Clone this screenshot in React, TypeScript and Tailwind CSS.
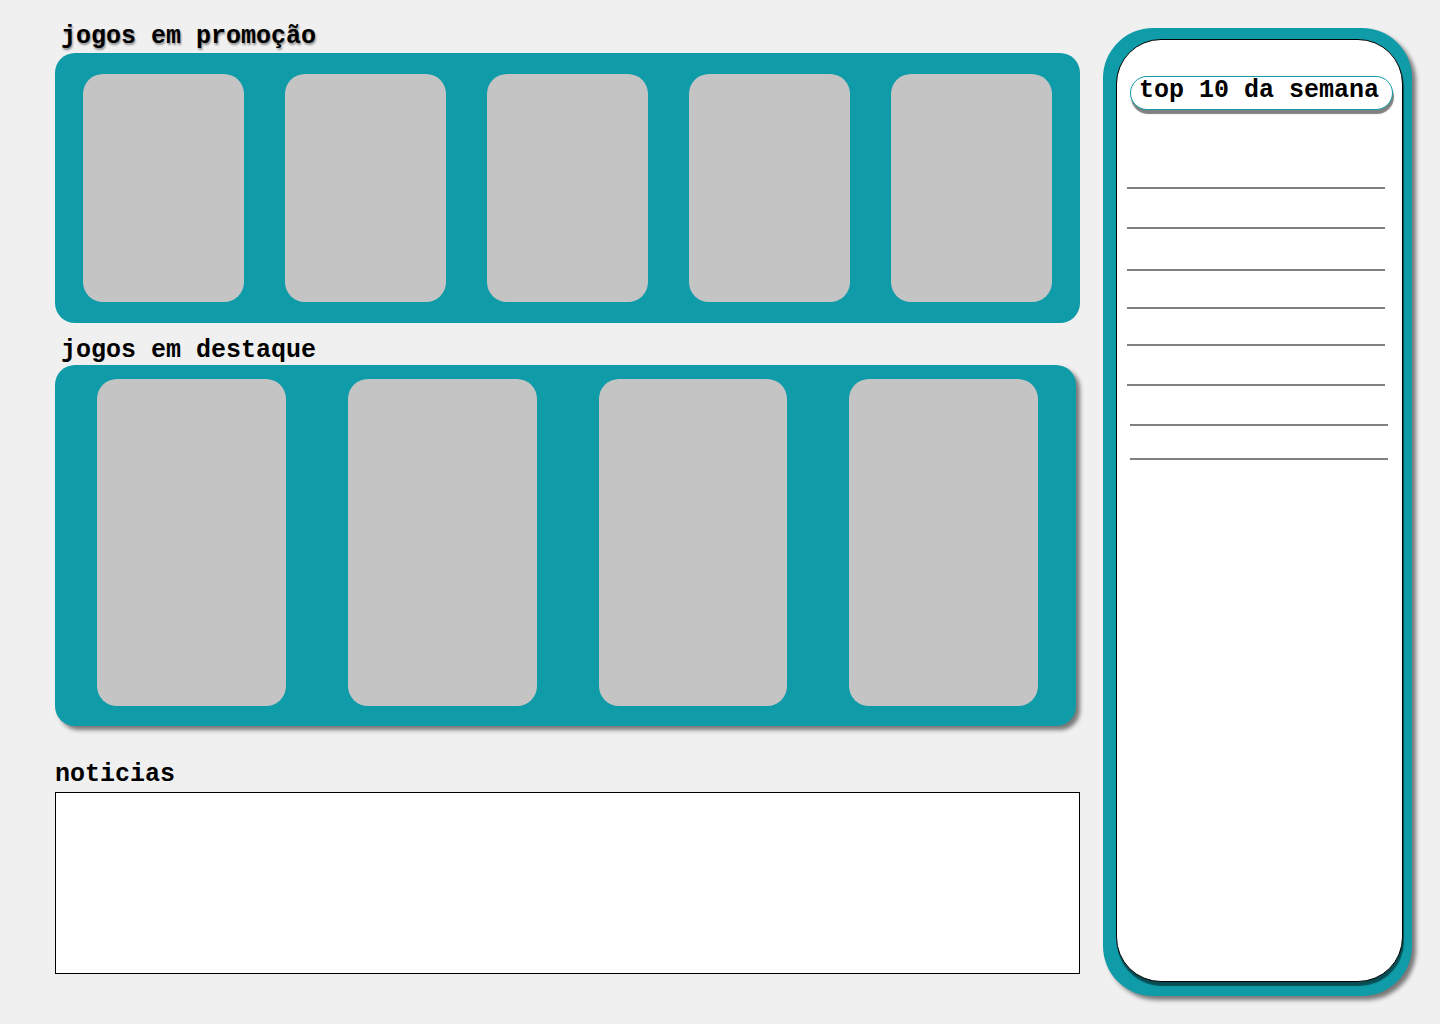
const promoGames = ["promo-1", "promo-2", "promo-3", "promo-4", "promo-5"];
const featuredGames = ["destaque-1", "destaque-2", "destaque-3", "destaque-4"];

const heading = "font-['Liberation_Mono',monospace] text-[25px] leading-7 font-bold text-black whitespace-nowrap";
const row = "border-b-2 border-[#808080]";

export default function App() {
  return (
    <div className="flex min-h-screen items-start gap-[23px] bg-[#f0f0f0] pr-7 pl-[55px]">
      <main className="min-w-0 flex-1 pt-[23px]">
        <section aria-labelledby="promo">
          <h2 id="promo" className={`${heading} pl-1.5 [text-shadow:1px_2px_2px_rgba(0,0,0,0.4)]`}>
            jogos em promoção
          </h2>
          <ul className="mt-0.5 grid grid-cols-5 gap-[41px] rounded-[20px] bg-[#0f9ba8] px-7 py-[21px]">
            {promoGames.map((id) => (
              <li key={id} className="h-[228px] rounded-[20px] bg-[#c4c4c4]" />
            ))}
          </ul>
        </section>

        <section aria-labelledby="destaque" className="mt-[14px]">
          <h2 id="destaque" className={`${heading} pl-1.5`}>
            jogos em destaque
          </h2>
          <ul className="mr-1 grid grid-cols-4 gap-[62px] rounded-[20px] bg-[#0f9ba8] pt-[14px] pr-[38px] pb-5 pl-[42px] shadow-[4px_4px_4px_rgba(0,0,0,0.5)]">
            {featuredGames.map((id) => (
              <li key={id} className="h-[327px] rounded-[20px] bg-[#c4c4c4]" />
            ))}
          </ul>
        </section>

        <section aria-labelledby="noticias" className="mt-[35px]">
          <h2 id="noticias" className={heading}>
            noticias
          </h2>
          <div className="mt-[3px] h-[182px] border border-black bg-white" />
        </section>
      </main>

      <aside
        aria-labelledby="top"
        className="mt-7 mb-7 w-[309px] shrink-0 rounded-[50px] bg-[#0f9ba8] pt-[11px] pr-[9px] pb-[14px] pl-[13px] shadow-[4px_4px_4px_rgba(0,0,0,0.5)]"
      >
        <div className="min-h-[943px] rounded-[45px] border border-black bg-white px-[10px] pt-9 shadow-[1px_4px_1px_rgba(0,0,0,0.5)]">
          <div className="-mr-px ml-[3px] rounded-full border border-[#0f9ba8] bg-white pb-1 shadow-[1px_4px_1px_#808080]">
            <h2 id="top" className={`${heading} pl-2`}>
              top 10 da semana
            </h2>
          </div>
          <ol className="mt-[39px] mr-[7px]">
            <li className={`${row} h-10`} />
            <li className={`${row} h-10`} />
            <li className={`${row} h-[42px]`} />
            <li className={`${row} h-[38px]`} />
            <li className={`${row} h-[37px]`} />
            <li className={`${row} h-10`} />
          </ol>
          <ol className="mr-1 ml-[3px]">
            <li className={`${row} h-10`} />
            <li className={`${row} h-[34px]`} />
          </ol>
        </div>
      </aside>
    </div>
  );
}
